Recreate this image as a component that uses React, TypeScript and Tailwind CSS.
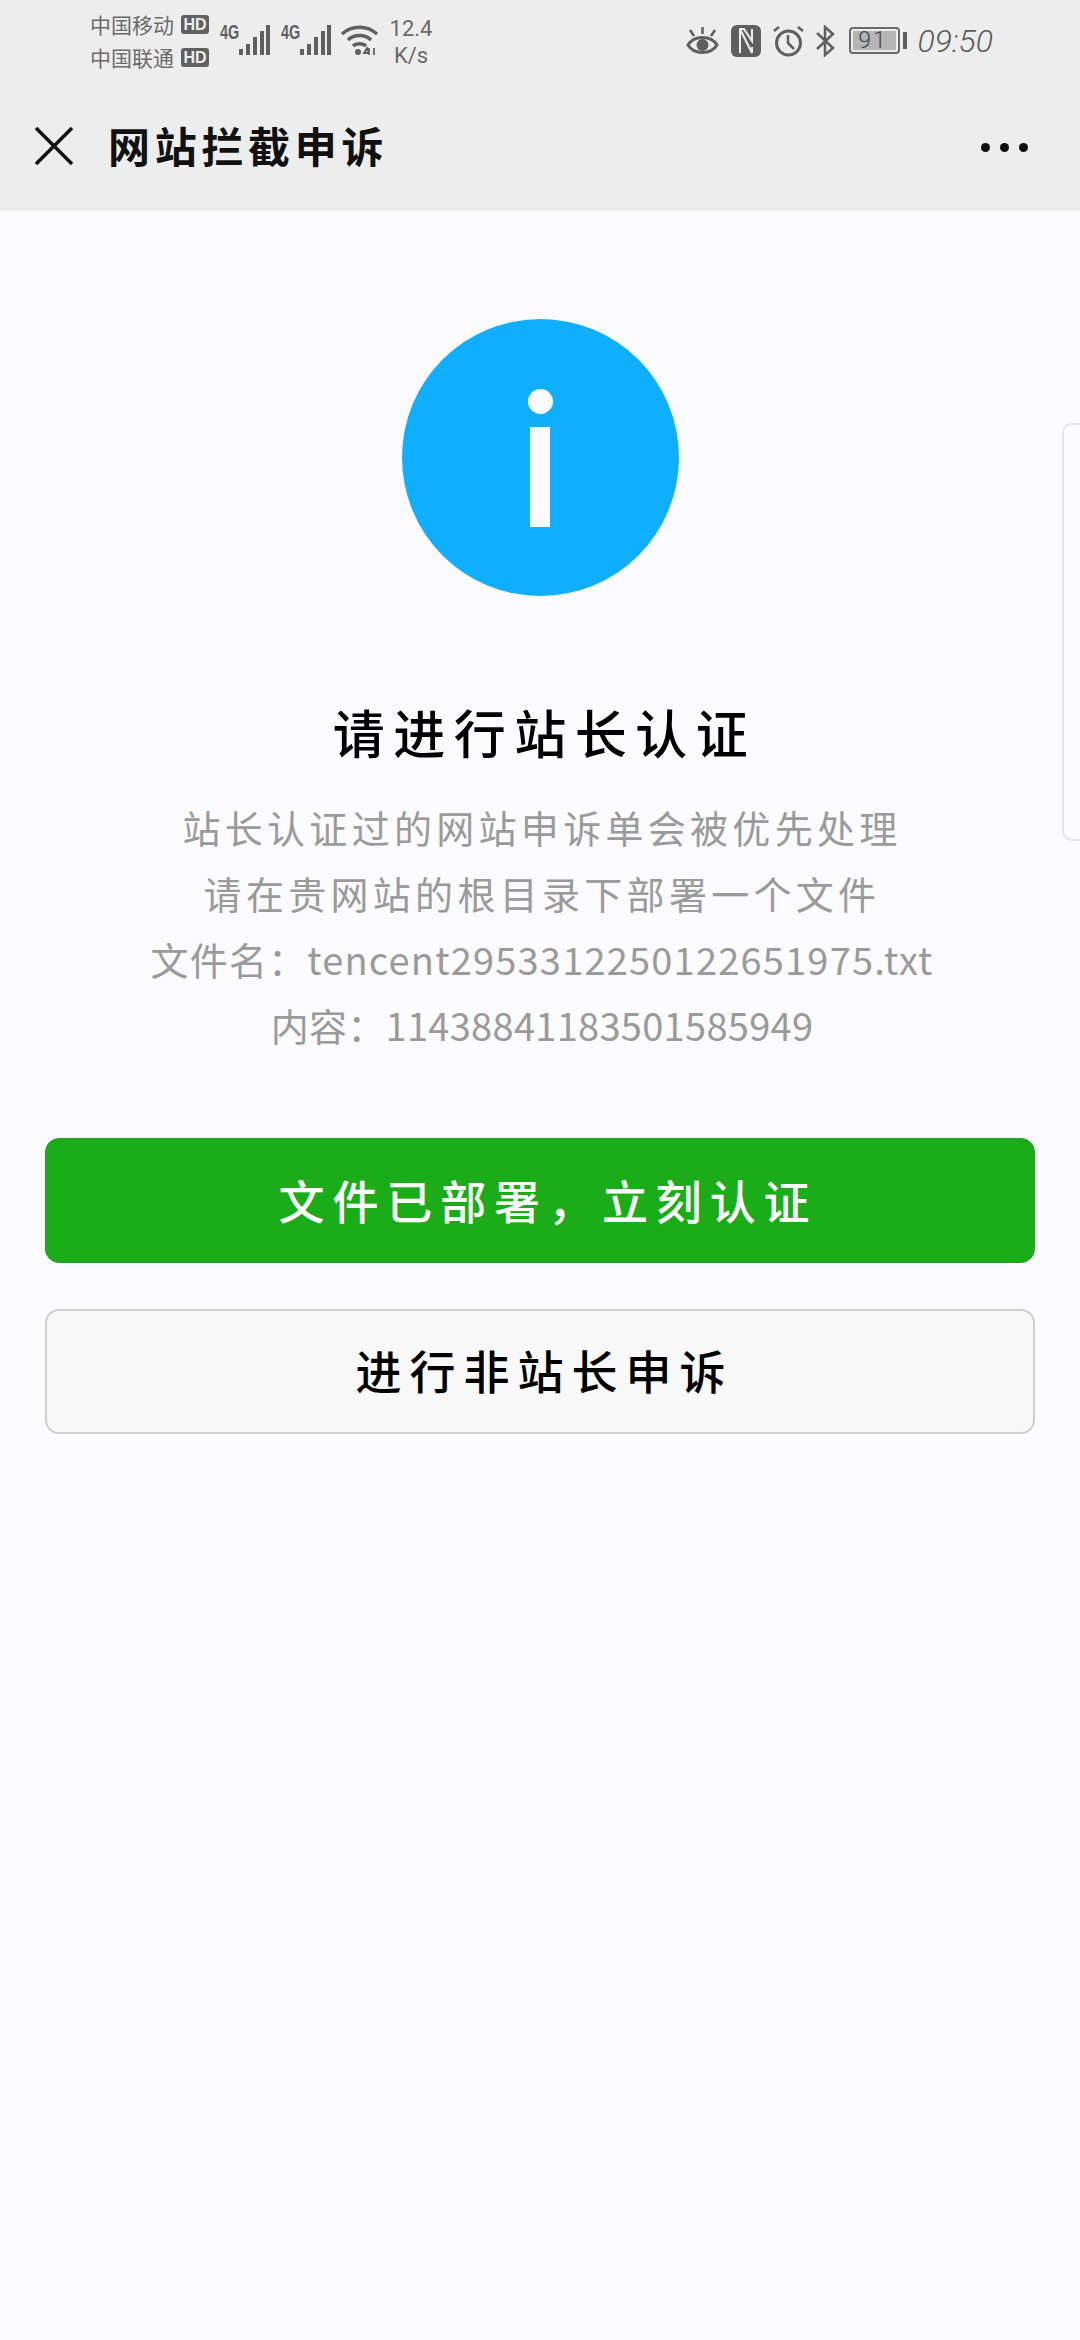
import React from 'react';

const CJK = 'font-["Noto_Sans_CJK_SC","Noto_Sans",sans-serif]';

function Signal() {
  return (
    <div className="flex items-start">
      <span className="font-['Liberation_Sans',sans-serif] font-bold text-[20px] leading-none text-[#5f5f5f] mt-[22px] w-[18px] whitespace-nowrap scale-x-[0.72] origin-left">4G</span>
      <svg width="32" height="32" viewBox="0 0 32 32" className="mt-[24px]" fill="#5f5f5f">
        <rect x="1" y="25" width="4" height="6" />
        <rect x="8" y="20" width="4" height="11" />
        <rect x="15" y="13" width="4" height="18" />
        <rect x="22" y="7" width="4" height="24" />
        <rect x="28" y="1" width="4" height="30" />
      </svg>
    </div>
  );
}

function Wifi() {
  return (
    <svg width="37" height="32" viewBox="0 0 37 32" fill="none" stroke="#5f5f5f" strokeWidth="3.400" className="mt-[24px] ml-[10px]">
      <path d="M1 10 C11 1 26 1 36 10" />
      <path d="M7 16 C13 10 24 10 30 16" />
      <path d="M12 22 C15 19 22 19 25 22" />
      <circle cx="17" cy="28" r="3" fill="#5f5f5f" stroke="none" />
      <path d="M26 24 L23 29 H28 Z M33 24 V31 M28 31 V24" strokeWidth="1.800" />
    </svg>
  );
}

function Carrier({ name }: { name: string }) {
  return (
    <div className="flex items-center h-[33px]">
      <span className="w-[91px] text-[21px] leading-none text-[#6a6a6a]">{name}</span>
      <span className="w-[28px] h-[19px] rounded-[3px] bg-[#606060] text-[#ededed] text-[16px] leading-[19px] font-bold text-center font-['Liberation_Sans',sans-serif]">HD</span>
    </div>
  );
}

function StatusBar() {
  return (
    <div className="h-[80px] pl-[90px] pr-[87px] flex justify-between">
      <div className="flex">
        <div className="flex flex-col pt-[8px]">
          <Carrier name="中国移动" />
          <Carrier name="中国联通" />
        </div>
        <div className="ml-[11px] flex gap-[11px]"><Signal /><Signal /></div>
        <Wifi />
        <div className="ml-[10px] w-[46px] pt-[15px] text-center font-['Roboto',sans-serif] text-[#6a6a6a] text-[22px] leading-[27px]">
          <div>12.4</div>
          <div>K/s</div>
        </div>
      </div>
      <div className="flex items-center pt-[1px]">
        <svg width="33" height="32" viewBox="0 0 33 32" fill="none" stroke="#5f5f5f" strokeWidth="3">
          <path d="M2 20 C8 10 25 10 31 20 C25 30 8 30 2 20 Z" />
          <circle cx="16.500" cy="20" r="6" fill="#5f5f5f" stroke="none" />
          <path d="M16.500 2 V9 M4 5 L8 11 M29 5 L25 11" strokeWidth="2.500" />
        </svg>
        <svg width="30" height="32" viewBox="0 0 30 32" className="ml-[12px]">
          <rect width="30" height="32" rx="6" fill="#5f5f5f" />
          <path d="M9 28 V4 H13 L21 16 V4 M21 28 V22 M9 4 L21 28" fill="none" stroke="#ededed" strokeWidth="2" />
        </svg>
        <svg width="31" height="32" viewBox="0 0 31 32" fill="none" stroke="#5f5f5f" strokeWidth="3" className="ml-[12px]">
          <circle cx="15.500" cy="18" r="12" />
          <path d="M15 10 V18 L21 24" strokeWidth="2.500" />
          <path d="M1 6 L6 2 M30 6 L25 2" strokeWidth="2.500" />
        </svg>
        <svg width="20" height="32" viewBox="0 0 20 32" fill="none" stroke="#5f5f5f" strokeWidth="2.500" className="ml-[11px]">
          <path d="M2 8 L18 23 L10 30 V2 L18 9 L2 24" />
        </svg>
        <div className="flex items-center ml-[14px]">
          <div className="w-[51px] h-[27px] border-2 border-[#6a6a6a] rounded-[4px] p-[2px] flex">
            <div className="w-[44px] bg-[#b5b5b5] text-[23px] leading-[19px] font-light text-[#444] text-center pr-[4px] font-['Roboto',sans-serif] tracking-[2px]">91</div>
          </div>
          <div className="w-[4px] h-[17px] bg-[#5f5f5f] ml-[3px]" />
        </div>
        <span className="ml-[10px] italic font-['Roboto',sans-serif] text-[32px] leading-none font-light text-[#5a5a5a]">09:50</span>
      </div>
    </div>
  );
}

function Header() {
  return (
    <header className="h-[211px] bg-[#ededed] flex flex-col">
      <StatusBar />
      <div className="flex-1 flex items-center pl-[35px] pr-[52px] pb-[2px]">
        <svg width="38" height="38" viewBox="0 0 38 38" stroke="#111" strokeWidth="3.500" fill="none" className="mt-[3px]">
          <path d="M1 1 L37 37 M37 1 L1 37" />
        </svg>
        <h1 className="ml-[35px] text-[42px] leading-none font-bold text-[#111] tracking-[4.700px]">网站拦截申诉</h1>
        <div className="ml-auto flex gap-[10px] mt-[6px]">
          <span className="w-[9px] h-[9px] rounded-full bg-[#111]" />
          <span className="w-[9px] h-[9px] rounded-full bg-[#111]" />
          <span className="w-[9px] h-[9px] rounded-full bg-[#111]" />
        </div>
      </div>
    </header>
  );
}

export default function App() {
  return (
    <div className={`relative h-[2340px] w-[1080px] overflow-hidden bg-[#fbfafd] ${CJK}`}>
      <Header />
      <main className="px-[45px] flex flex-col items-center">
        <div className="mt-[108px] w-[277px] h-[277px] rounded-full bg-[#10aeff] flex flex-col items-center">
          <span className="mt-[70px] w-[25px] h-[25px] rounded-full bg-[#fbfafd]" />
          <span className="mt-[13px] w-[20px] h-[100px] bg-[#fbfafd]" />
        </div>
        <h2 className="mt-[101px] pl-[9px] text-[52px] leading-[70px] font-medium text-black tracking-[8.500px]">请进行站长认证</h2>
        <div className="mt-[27px] pl-[4px] text-[38px] leading-[66px] text-center text-[#9a9a9a] whitespace-nowrap">
          <p className="tracking-[4.300px]">站长认证过的网站申诉单会被优先处理</p>
          <p className="tracking-[4.300px]">请在贵网站的根目录下部署一个文件</p>
          <p className="tracking-[1.200px]">文件名：tencent2953312250122651975.txt</p>
          <p className="tracking-[0.300px]">内容：11438841183501585949</p>
        </div>
        <button className="mt-[80px] w-full h-[125px] pl-[16px] pb-[2px] rounded-[14px] bg-[#1aad19] border border-[#2a9a29] text-white text-[46px] font-medium tracking-[7.900px]">文件已部署，立刻认证</button>
        <button className="mt-[46px] w-full h-[125px] pl-[9px] pb-[4px] rounded-[14px] bg-[#f8f8f8] border-2 border-[#cfcfcf] text-black text-[46px] font-medium tracking-[8px]">进行非站长申诉</button>
      </main>
      {/* half hidden panel on the right edge */}
      <div className="absolute left-[1062px] top-[423px] w-[40px] h-[418px] rounded-[10px] border-2 border-[#e6e6e9] bg-[#fcfbfd]" />
    </div>
  );
}
